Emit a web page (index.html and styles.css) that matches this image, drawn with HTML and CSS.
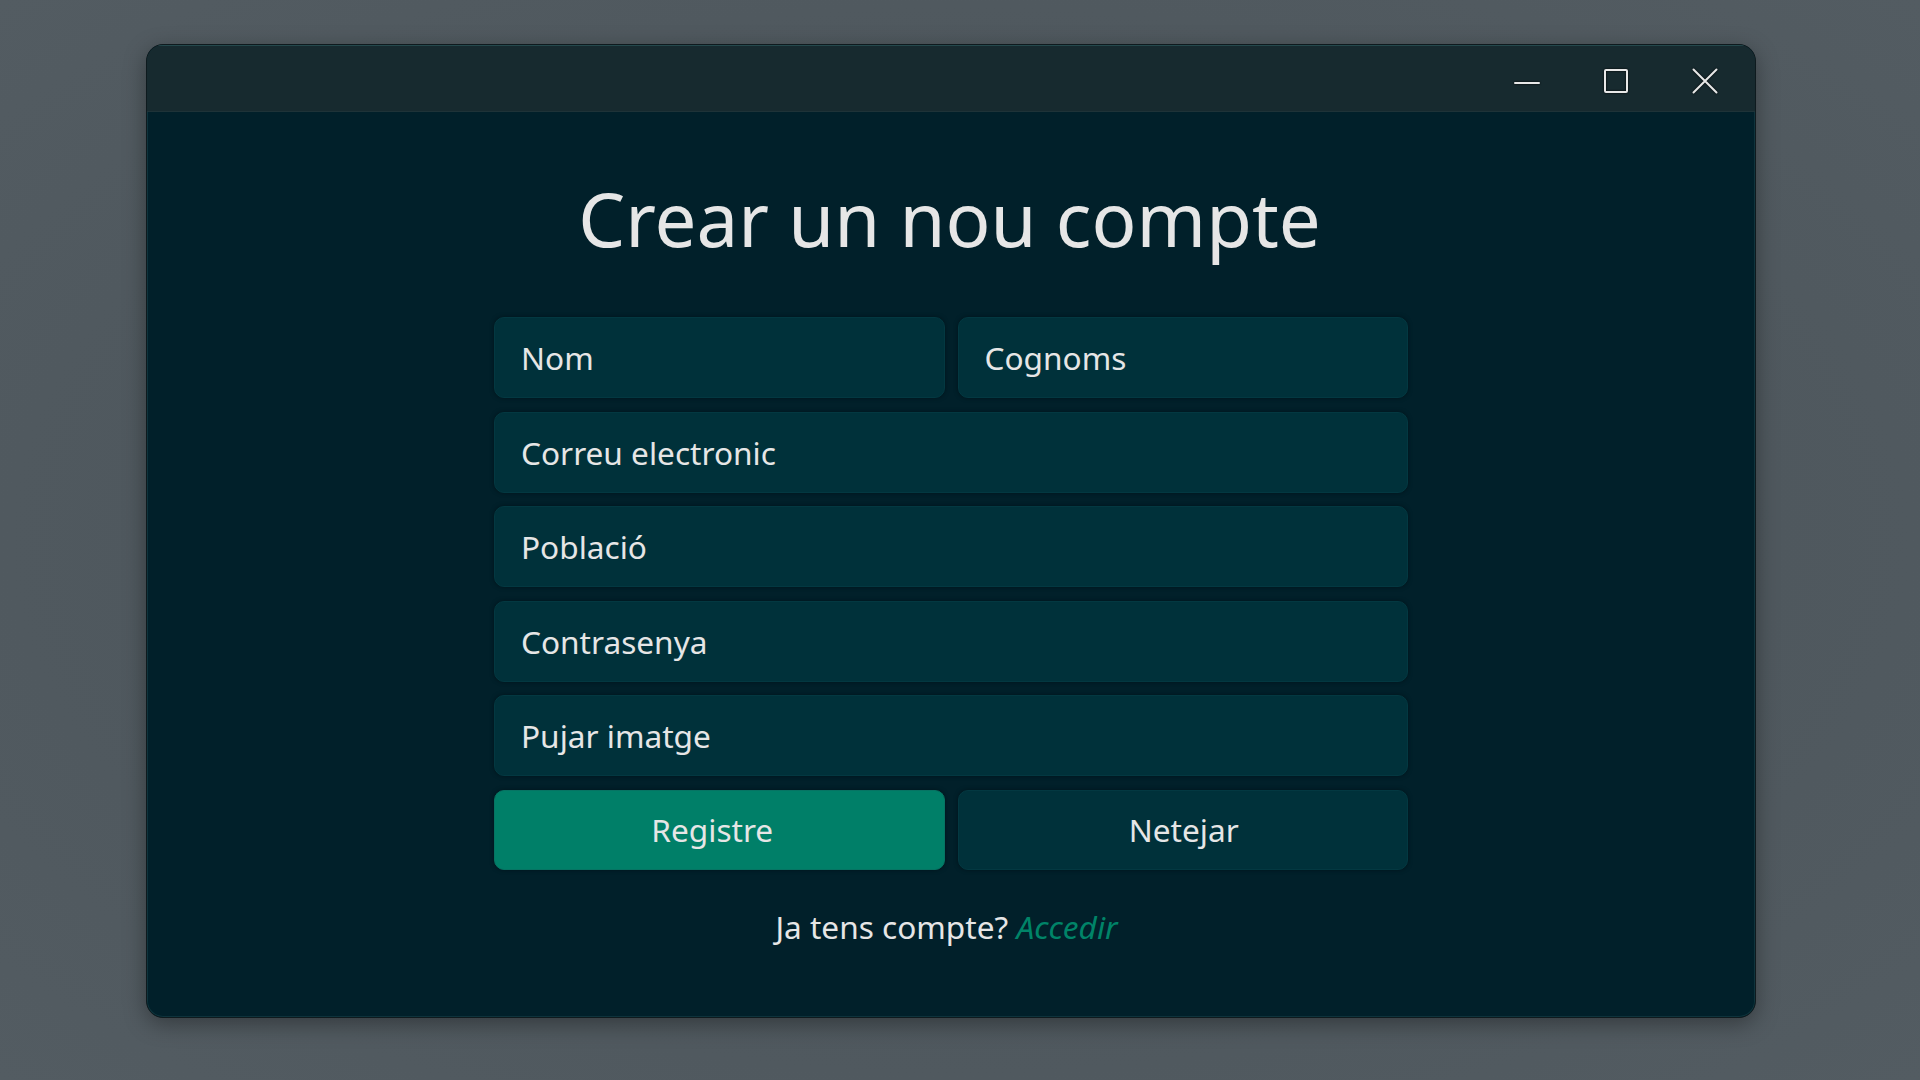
FILE: index.html
```html
<!DOCTYPE html>
<html lang="ca">
<head>
<meta charset="utf-8">
<title>Crear un nou compte</title>
<link rel="stylesheet" href="styles.css">
</head>
<body>
<div class="desktop">
  <div class="window">
    <div class="titlebar">
      <div class="controls">
        <button class="ctl" aria-label="Minimitzar">
          <svg width="26" height="26" viewBox="0 0 26 26"><path d="M1 13H25" stroke="#e8e8e8" stroke-width="2" stroke-linecap="round"/></svg>
        </button>
        <button class="ctl" aria-label="Maximitzar">
          <svg width="26" height="26" viewBox="0 0 26 26"><rect x="2" y="2" width="22" height="22" rx="1" fill="none" stroke="#e8e8e8" stroke-width="2"/></svg>
        </button>
        <button class="ctl" aria-label="Tancar">
          <svg width="26" height="26" viewBox="0 0 26 26"><path d="M1.5 1.5L24.5 24.5M24.5 1.5L1.5 24.5" stroke="#e8e8e8" stroke-width="2" stroke-linecap="round"/></svg>
        </button>
      </div>
    </div>
    <div class="content">
      <h1 class="title">Crear un nou compte</h1>
      <form class="form">
        <div class="row two">
          <div class="field">Nom</div>
          <div class="field">Cognoms</div>
        </div>
        <div class="field">Correu electronic</div>
        <div class="field">Població</div>
        <div class="field">Contrasenya</div>
        <div class="field">Pujar imatge</div>
        <div class="row two">
          <div class="btn primary">Registre</div>
          <div class="btn secondary">Netejar</div>
        </div>
      </form>
      <p class="login">Ja tens compte? <a class="link">Accedir</a></p>
    </div>
  </div>
</div>
</body>
</html>
```
FILE: styles.css
```css
* { box-sizing: border-box; }
html, body {
  margin: 0;
  padding: 0;
  width: 1920px;
  height: 1080px;
  overflow: hidden;
}
body {
  background: radial-gradient(ellipse at center, #454e54 0%, #4f585e 60%, #535c62 100%);
  font-family: "Noto Sans", "Open Sans", sans-serif;
  color: #e6e6e6;
}
.desktop {
  padding: 44px 0 0 146px;
}
.window {
  width: 1610px;
  height: 974px;
  border-radius: 17px;
  background: #01202a;
  border: 1px solid #0e1a1e;
  box-shadow: 0 0 0 1px rgba(40, 90, 95, 0.35) inset, 0 6px 22px rgba(0, 0, 0, 0.35);
  overflow: hidden;
  display: flex;
  flex-direction: column;
}
.titlebar {
  height: 67px;
  background: #172a2f;
  border-top: 1px solid #24484c;
  border-bottom: 1px solid #1e3338;
  display: flex;
  justify-content: flex-end;
  align-items: center;
  padding-right: 6px;
  padding-top: 5px;
  flex-shrink: 0;
}
.controls {
  display: flex;
}
.ctl {
  width: 89px;
  height: 60px;
  border: 0;
  background: transparent;
  padding: 0;
  display: flex;
  align-items: center;
  justify-content: center;
  filter: drop-shadow(0 0 1px rgba(0,0,0,0.9));
}
.ctl:first-child svg { margin-top: 3px; }
.content {
  flex: 1;
  display: flex;
  flex-direction: column;
  align-items: center;
  padding-top: 69px;
}
.title {
  margin: 0;
  font-size: 74.4px;
  line-height: 75px;
  font-weight: 400;
  color: #e6e6e6;
  padding-right: 3px;
}
.form {
  margin-top: 61px;
  width: 914px;
  display: flex;
  flex-direction: column;
  gap: 13.6px;
}
.row.two {
  display: grid;
  grid-template-columns: 1fr 1fr;
  gap: 13px;
}
.field, .btn {
  height: 81px;
  border-radius: 10px;
  background: #00313a;
  border: 1px solid #033841;
  box-shadow: 0 0 4px rgba(0, 10, 15, 0.55);
  font-size: 31.6px;
  display: flex;
  align-items: center;
  padding-left: 26px;
  color: #e6e6e6;
}
.btn {
  height: 80px;
  justify-content: center;
  padding-left: 0;
}
.btn.primary {
  background: #007f68;
  border-color: #067463;
  padding-right: 14px;
}
.btn.secondary {
  padding-left: 2px;
}
.login {
  margin: 35px 0 0;
  font-size: 31.6px;
  color: #e6e6e6;
  padding-right: 9px;
}
.link {
  color: #008468;
  font-style: italic;
}
```
